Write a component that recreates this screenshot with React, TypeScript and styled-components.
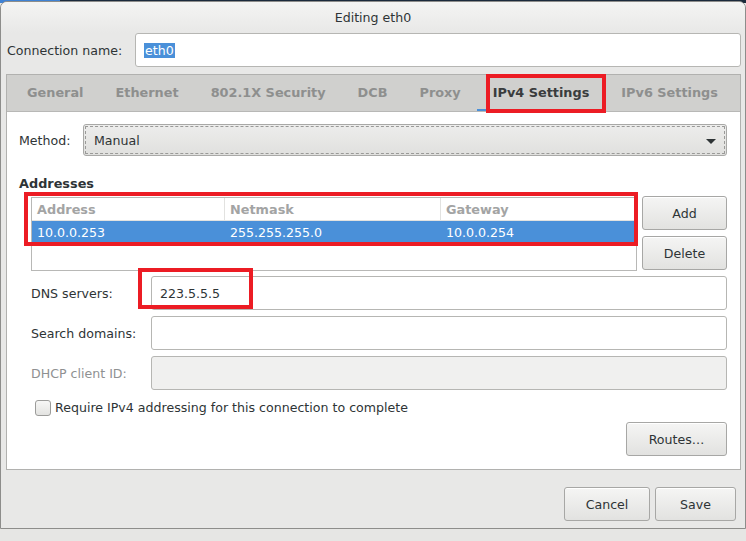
import React from 'react'
import styled, { createGlobalStyle } from 'styled-components'

const GlobalStyle = createGlobalStyle`
  html, body {
    margin: 0;
    padding: 0;
  }
  body {
    width: 746px;
    height: 541px;
    overflow: hidden;
    font-family: 'DejaVu Sans', 'Liberation Sans', sans-serif;
    font-size: 12.6px;
    color: #2e3436;
  }
  * {
    box-sizing: border-box;
  }
`

const Desktop = styled.div`
  height: 541px;
  padding-top: 1px;
  background: linear-gradient(90deg, #3f82d4 0, #3f82d4 60px, #1b2a3b 60px) top / 100% 3px no-repeat,
    #e6e6e4;
`

const Window = styled.div`
  width: 746px;
  height: 528px;
  display: flex;
  flex-direction: column;
  border: 1px solid #8d8d8b;
  border-radius: 7px 7px 0 0;
  background: #e8e8e7;
  overflow: hidden;
`

const TitleBar = styled.div`
  height: 31px;
  line-height: 31px;
  text-align: center;
  color: #2e3436;
  background: linear-gradient(180deg, #f4f4f3 0%, #e8e8e7 100%);
`

const Body = styled.div`
  display: flex;
  flex-direction: column;
  padding: 0 4px 0 5px;
`

const NameRow = styled.div`
  display: flex;
  align-items: center;
  height: 34px;
`

const NameLabel = styled.label`
  width: 129px;
  padding-left: 1px;
  color: #2e3436;
`

const Entry = styled.div<{ disabled?: boolean }>`
  flex: 1;
  height: 34px;
  display: flex;
  align-items: center;
  padding-left: 8px;
  border: 1px solid #b6b6b3;
  border-radius: 3px;
  background: ${(props) => (props.disabled ? '#f0f0ef' : '#ffffff')};
  color: #2e3436;
`

const Selected = styled.span`
  background: #4a90d9;
  color: #ffffff;
  padding: 0 1px;
  line-height: 15px;
`

const Notebook = styled.div`
  margin-top: 7px;
  height: 396px;
  display: flex;
  flex-direction: column;
  border: 1px solid #b1b1af;
  background: #ffffff;
`

const TabStrip = styled.div`
  display: flex;
  height: 37px;
  padding-left: 4px;
  background: #d0d0ce;
  border-bottom: 1px solid #b8b8b6;
`

const Tab = styled.div<{ active?: boolean }>`
  position: relative;
  padding: 0 16px;
  line-height: 35px;
  font-size: 12.85px;
  font-weight: bold;
  color: ${(props) => (props.active ? '#3a3c3d' : '#8e8f8e')};
  border-bottom: 2px solid ${(props) => (props.active ? '#4a90d9' : 'transparent')};
`

const Mark = styled.div`
  position: absolute;
  border: 4px solid #ec1c24;
  pointer-events: none;
`

const TabMark = styled(Mark)`
  left: 9px;
  right: -1px;
  top: -1px;
  bottom: -4px;
`

const Page = styled.div`
  flex: 1;
  display: flex;
  flex-direction: column;
  padding: 12px 13px 0 12px;
`

const MethodRow = styled.div`
  display: flex;
  align-items: center;
`

const MethodLabel = styled.label`
  width: 64px;
`

const Combo = styled.div`
  flex: 1;
  height: 32px;
  display: flex;
  align-items: center;
  justify-content: space-between;
  padding: 0 10px 0 10px;
  border: 1px solid #a9a9a7;
  border-radius: 3px;
  outline: 1px dashed #9a9a98;
  outline-offset: -3px;
  background: linear-gradient(180deg, #ededec 0%, #e0e0de 100%);
`

const Arrow = styled.span`
  width: 0;
  height: 0;
  border-left: 5px solid transparent;
  border-right: 5px solid transparent;
  border-top: 5px solid #2e3436;
  margin-top: 2px;
`

const SectionTitle = styled.div`
  margin-top: 20px;
  line-height: 16px;
  font-size: 12.85px;
  font-weight: bold;
  color: #2e3436;
`

const AddressRow = styled.div`
  display: flex;
  gap: 5px;
  margin-top: 4px;
  padding-left: 12px;
`

const TableWrap = styled.div`
  position: relative;
  flex: 1;
  margin-top: 1px;
`

const Table = styled.div`
  height: 74px;
  border: 1px solid #b8b8b6;
  background: #ffffff;
`

const TableRow = styled.div<{ header?: boolean; selected?: boolean }>`
  display: grid;
  grid-template-columns: 193px 216px 1fr;
  height: 23px;
  background: ${(props) => (props.selected ? '#4a90d9' : '#ffffff')};
  color: ${(props) => (props.header ? '#a3a4a4' : props.selected ? '#ffffff' : '#2e3436')};
  font-weight: ${(props) => (props.header ? 'bold' : 'normal')};
  font-size: ${(props) => (props.header ? '12.85px' : '12.6px')};
  border-bottom: ${(props) => (props.header ? '1px solid #e2e2e0' : 'none')};
`

const Cell = styled.div<{ header?: boolean }>`
  display: flex;
  align-items: center;
  padding-left: 5px;
  border-right: ${(props) => (props.header ? '1px solid #e2e2e0' : 'none')};
  &:last-child {
    border-right: none;
  }
`

const TableMark = styled(Mark)`
  left: -7px;
  top: -5px;
  width: 614px;
  height: 54px;
`

const SideButtons = styled.div`
  display: flex;
  flex-direction: column;
  gap: 6px;
  width: 85px;
`

const Button = styled.button<{ w?: number }>`
  height: 34px;
  width: ${(props) => (props.w ? props.w + 'px' : '100%')};
  border: 1px solid #a7a7a5;
  border-radius: 3px;
  background: linear-gradient(180deg, #f5f5f4 0%, #e2e2e0 100%);
  box-shadow: inset 0 1px #ffffff;
  font-family: inherit;
  font-size: 12.6px;
  color: #2e3436;
  padding: 0;
`

const Fields = styled.div`
  display: grid;
  grid-template-columns: 120px 1fr;
  row-gap: 6px;
  align-items: center;
  margin-top: 5px;
  padding-left: 12px;
`

const FieldLabel = styled.label<{ disabled?: boolean }>`
  color: ${(props) => (props.disabled ? '#8f9192' : '#2e3436')};
`

const EntryWrap = styled.div`
  position: relative;
  display: flex;
`

const DnsMark = styled(Mark)`
  left: -13px;
  top: -8px;
  width: 115px;
  height: 41px;
`

const CheckRow = styled.div`
  display: flex;
  align-items: center;
  gap: 4px;
  margin-top: 10px;
  padding-left: 16px;
  line-height: 16px;
`

const Checkbox = styled.span`
  width: 16px;
  height: 16px;
  border: 1px solid #9c9c9a;
  border-radius: 3px;
  background: linear-gradient(180deg, #f7f7f6 0%, #e3e3e1 100%);
`

const RoutesRow = styled.div`
  display: flex;
  justify-content: flex-end;
  margin-top: 6px;
`

const Footer = styled.div`
  display: flex;
  justify-content: flex-end;
  gap: 5px;
  margin-top: 17px;
  padding-right: 5px;
`

const tabs = ['General', 'Ethernet', '802.1X Security', 'DCB', 'Proxy', 'IPv4 Settings', 'IPv6 Settings']

const App = () => {
  return (
    <>
      <GlobalStyle />
      <Desktop>
        <Window>
          <TitleBar>Editing eth0</TitleBar>
          <Body>
            <NameRow>
              <NameLabel>Connection name:</NameLabel>
              <Entry>
                <Selected>eth0</Selected>
              </Entry>
            </NameRow>
            <Notebook>
              <TabStrip>
                {tabs.map((tab) => (
                  <Tab key={tab} active={tab == 'IPv4 Settings'}>
                    {tab}
                    {tab == 'IPv4 Settings' && <TabMark />}
                  </Tab>
                ))}
              </TabStrip>
              <Page>
                <MethodRow>
                  <MethodLabel>Method:</MethodLabel>
                  <Combo>
                    <span>Manual</span>
                    <Arrow />
                  </Combo>
                </MethodRow>
                <SectionTitle>Addresses</SectionTitle>
                <AddressRow>
                  <TableWrap>
                    <Table>
                      <TableRow header>
                        <Cell header>Address</Cell>
                        <Cell header>Netmask</Cell>
                        <Cell header>Gateway</Cell>
                      </TableRow>
                      <TableRow selected>
                        <Cell>10.0.0.253</Cell>
                        <Cell>255.255.255.0</Cell>
                        <Cell>10.0.0.254</Cell>
                      </TableRow>
                    </Table>
                    <TableMark />
                  </TableWrap>
                  <SideButtons>
                    <Button>Add</Button>
                    <Button>Delete</Button>
                  </SideButtons>
                </AddressRow>
                <Fields>
                  <FieldLabel>DNS servers:</FieldLabel>
                  <EntryWrap>
                    <Entry>223.5.5.5</Entry>
                    <DnsMark />
                  </EntryWrap>
                  <FieldLabel>Search domains:</FieldLabel>
                  <EntryWrap>
                    <Entry />
                  </EntryWrap>
                  <FieldLabel disabled>DHCP client ID:</FieldLabel>
                  <EntryWrap>
                    <Entry disabled />
                  </EntryWrap>
                </Fields>
                <CheckRow>
                  <Checkbox />
                  <span>Require IPv4 addressing for this connection to complete</span>
                </CheckRow>
                <RoutesRow>
                  <Button w={101}>Routes…</Button>
                </RoutesRow>
              </Page>
            </Notebook>
            <Footer>
              <Button w={86}>Cancel</Button>
              <Button w={81}>Save</Button>
            </Footer>
          </Body>
        </Window>
      </Desktop>
    </>
  )
}

export default App
